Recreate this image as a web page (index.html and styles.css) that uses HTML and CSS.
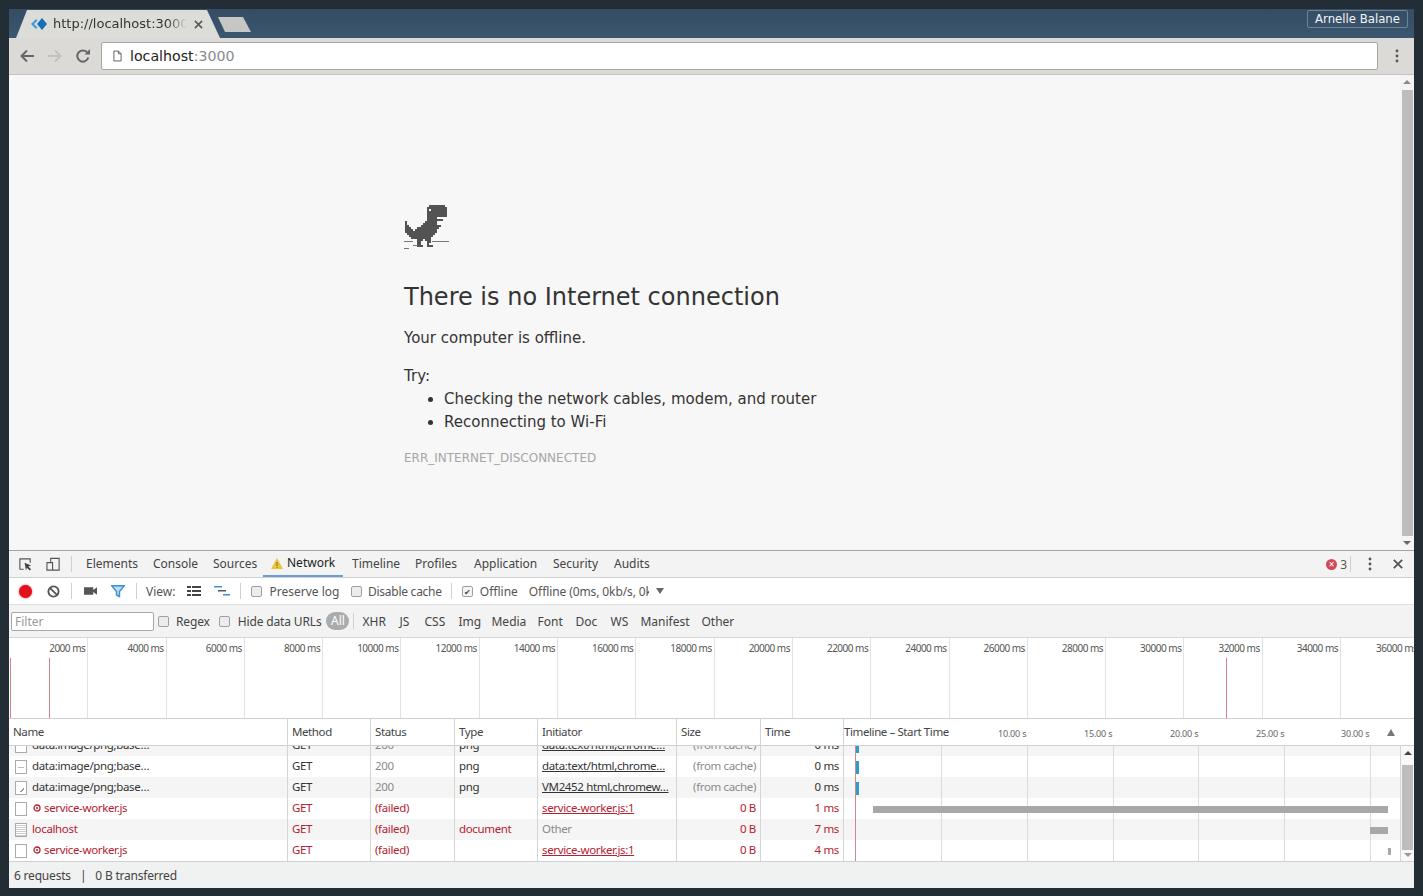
FILE: index.html
```html
<!DOCTYPE html>
<html lang="en">
<head>
<meta charset="utf-8">
<title>localhost:3000</title>
<link rel="stylesheet" href="styles.css">
</head>
<body>
<div class="window">
  <div class="tabstrip">
    <div class="tab">
      <svg class="favicon" viewBox="0 0 16 12"><path d="M5 1 0 6l5 5 1.500-1.500L3 6l3.500-3.500z" fill="#3f9bd8"/><path d="M11 0l-5 6 5 6 5-6z" fill="#1470b8"/></svg>
      <span class="tab-title">http://localhost:3000</span>
      <svg class="tab-close" viewBox="0 0 10 10"><path d="M1 1l8 8M9 1l-8 8" stroke="#5a5a5a" stroke-width="1.800"/></svg>
    </div>
    <div class="newtab"></div>
    <div class="profile">Arnelle Balane</div>
  </div>
  <div class="toolbar">
    <svg class="nav nav-first" viewBox="0 0 16 16"><path d="M15 8H3M8 2.500 2.500 8 8 13.500" fill="none" stroke="#666" stroke-width="2"/></svg>
    <svg class="nav" viewBox="0 0 16 16"><path d="M1 8h12M8 2.500 13.500 8 8 13.500" fill="none" stroke="#c0c0bc" stroke-width="2"/></svg>
    <svg class="nav" viewBox="0 0 16 16"><path d="M13.300 9.500A5.600 5.600 0 1 1 12 4.200" fill="none" stroke="#666" stroke-width="2"/><path d="M9.500 6.500H15V1z" fill="#666"/></svg>
    <div class="omnibox">
      <svg class="page-icon" viewBox="0 0 10 13"><path d="M1 1h5l3 3v8H1zM6 1v3h3" fill="none" stroke="#555" stroke-width="1"/></svg>
      <span class="host">localhost</span><span class="port">:3000</span>
    </div>
    <svg class="kebab" viewBox="0 0 4 14"><circle cx="2" cy="2" r="1.400"/><circle cx="2" cy="7" r="1.400"/><circle cx="2" cy="12" r="1.400"/></svg>
  </div>
  <div class="viewport">
    <main class="page">
      <svg class="dino" viewBox="0 0 22 22" shape-rendering="crispEdges"><path fill="#535353" d="M12 0h8v1h-8zM11 1h10v1H11zM11 2h1v1h-1zM13 2h8v1h-8zM11 3h10v3H11zM11 6h5v1h-5zM11 7h8v1h-8zM0 8h1v1H0zM10 8h6v1h-6zM0 9h1v1H0zM9 9h7v1H9zM0 10h2v1H0zM8 10h10v1H8zM0 11h3v1H0zM6 11h11v1H6zM0 12h4v1H0zM5 12h11v1H5zM0 13h16v1H0zM1 14h14v1H1zM2 15h12v1H2zM3 16h10v1H3zM6 17h3v1H6zM10 17h3v1h-3zM6 18h2v1H6zM11 18h2v1h-2zM6 19h2v1H6zM11 19h1v1h-1zM6 20h3v1H6zM11 20h3v1h-3z"/></svg>
      <div class="ground"><i class="g1"></i><i class="g2"></i><i class="g3"></i><i class="g4"></i></div>
      <h1>There is no Internet connection</h1>
      <p class="lead">Your computer is offline.</p>
      <p class="try">Try:</p>
      <ul>
        <li>Checking the network cables, modem, and router</li>
        <li>Reconnecting to Wi-Fi</li>
      </ul>
      <div class="errcode">ERR_INTERNET_DISCONNECTED</div>
    </main>
    <div class="pagebar">
      <span class="arrow-up"></span><span class="pagethumb"></span><span class="arrow-down"></span>
    </div>
  </div>
  <section class="devtools">
    <div class="dt-tabs">
      <svg class="dt-ico ico-first" viewBox="0 0 16 16"><path d="M6 13H2V2h11v4" fill="none" stroke="#555" stroke-width="1.200"/><path d="M7 6l7 3-3 1 3 3-1.500 1.500-3-3-1 3z" fill="#444"/></svg>
      <svg class="dt-ico ico-device" viewBox="0 0 16 16"><path d="M5 6V1.500h9V14H1V6h6v8" fill="none" stroke="#555" stroke-width="1.200"/></svg>
      <span class="sep sep-tabs"></span>
      <span class="dt-tab t-elements">Elements</span>
      <span class="dt-tab t-console">Console</span>
      <span class="dt-tab t-sources">Sources</span>
      <span class="dt-tab t-network"><svg class="warn" viewBox="0 0 12 11"><path d="M6 0l6 11H0z" fill="#e9c53a"/><path d="M5.500 4h1v4h-1zM5.500 9h1v1h-1z" fill="#8a6d10"/></svg>Network</span>
      <span class="dt-tab t-timeline">Timeline</span>
      <span class="dt-tab t-profiles">Profiles</span>
      <span class="dt-tab t-application">Application</span>
      <span class="dt-tab t-security">Security</span>
      <span class="dt-tab t-audits">Audits</span>
      <span class="errors"><span class="err-dot">×</span>3</span>
      <span class="sep"></span>
      <svg class="kebab kebab-dt" viewBox="0 0 4 14"><circle cx="2" cy="2" r="1.400"/><circle cx="2" cy="7" r="1.400"/><circle cx="2" cy="12" r="1.400"/></svg>
      <svg class="dt-close" viewBox="0 0 10 10"><path d="M.8.8l8.400 8.400M9.200.8.800 9.200" stroke="#555" stroke-width="1.800"/></svg>
    </div>
    <div class="net-toolbar">
      <span class="record"></span>
      <svg class="t-ico ic-clear" viewBox="0 0 14 14"><circle cx="7" cy="7" r="5.500" fill="none" stroke="#555" stroke-width="2"/><path d="M3 3l8 8" stroke="#555" stroke-width="2"/></svg>
      <span class="sep sep-a"></span>
      <svg class="t-ico ic-cam" viewBox="0 0 14 10"><path d="M0 1h10v8H0zM10 4l4-3v8l-4-3z" fill="#555"/></svg>
      <svg class="t-ico ic-filter" viewBox="0 0 14 13"><path d="M.7.700h12.600L8.500 6.500v5l-3-1.500V6.500z" fill="#bcdcf0" stroke="#3a8fd0" stroke-width="1.400"/></svg>
      <span class="sep sep-b"></span>
      <span class="lbl view-lbl">View:</span>
      <svg class="t-ico ic-list" viewBox="0 0 14 10"><path d="M0 0h4v2H0zM5 0h9v2H5zM0 4h4v2H0zM5 4h9v2H5zM0 8h4v2H0zM5 8h9v2H5z" fill="#444"/></svg>
      <svg class="t-ico ic-wfall" viewBox="0 0 16 10"><path d="M0 0h8v1.500H0z" fill="#3a8fd0"/><path d="M4 4h8v1.500H4z" fill="#555"/><path d="M9 8h7v1.500H9z" fill="#3a8fd0"/></svg>
      <span class="sep sep-c"></span>
      <span class="cb cb-preserve"></span><span class="lbl">Preserve log</span>
      <span class="cb cb-disable"></span><span class="lbl lbl-tight">Disable cache</span>
      <span class="sep sep-d"></span>
      <span class="cb cb-checked">✔</span><span class="lbl">Offline</span>
      <span class="lbl throttle">Offline (0ms, 0kb/s, 0kb/s)</span>
      <span class="select-arrow"></span>
    </div>
    <div class="net-filter">
      <span class="filter-input">Filter</span>
      <span class="cb cb-regex"></span><span class="lbl">Regex</span>
      <span class="cb cb-hide"></span><span class="lbl">Hide data URLs</span>
      <span class="pill">All</span>
      <span class="sep sep-f"></span>
      <span class="ft f-xhr">XHR</span>
      <span class="ft f-js">JS</span>
      <span class="ft f-css">CSS</span>
      <span class="ft f-img">Img</span>
      <span class="ft f-media">Media</span>
      <span class="ft f-font">Font</span>
      <span class="ft f-doc">Doc</span>
      <span class="ft f-ws">WS</span>
      <span class="ft f-man">Manifest</span>
      <span class="ft">Other</span>
    </div>
    <div class="overview">
      <span class="ov">2000 ms</span><span class="ov">4000 ms</span><span class="ov">6000 ms</span><span class="ov">8000 ms</span><span class="ov">10000 ms</span><span class="ov">12000 ms</span><span class="ov">14000 ms</span><span class="ov">16000 ms</span><span class="ov">18000 ms</span><span class="ov">20000 ms</span><span class="ov">22000 ms</span><span class="ov">24000 ms</span><span class="ov">26000 ms</span><span class="ov">28000 ms</span><span class="ov">30000 ms</span><span class="ov">32000 ms</span><span class="ov">34000 ms</span><span class="ov ov-last">36000 ms</span>
      <i class="ov-red r0"></i><i class="ov-red r1"></i><i class="ov-red r2"></i>
    </div>
    <div class="net-grid">
      <div class="ghead">
        <span class="gc">Name</span><span class="gc">Method</span><span class="gc">Status</span><span class="gc">Type</span><span class="gc">Initiator</span><span class="gc">Size</span><span class="gc">Time</span>
        <span class="gc gc-tl">Timeline – Start Time
          <span class="tk k1">10.00 s</span><span class="tk k2">15.00 s</span><span class="tk k3">20.00 s</span><span class="tk k4">25.00 s</span><span class="tk k5">30.00 s</span>
          <span class="sort"></span>
        </span>
      </div>
      <div class="gbody">
        <div class="rows">
          <div class="row alt"><span class="gc name"><i class="file"></i>data:image/png;base…</span><span class="gc">GET</span><span class="gc muted">200</span><span class="gc">png</span><span class="gc"><u>data:text/html,chrome…</u></span><span class="gc muted right">(from cache)</span><span class="gc right">0 ms</span><span class="gc"></span></div>
          <div class="row"><span class="gc name"><i class="file file-dash"></i>data:image/png;base…</span><span class="gc">GET</span><span class="gc muted">200</span><span class="gc">png</span><span class="gc"><u>data:text/html,chrome…</u></span><span class="gc muted right">(from cache)</span><span class="gc right">0 ms</span><span class="gc"></span></div>
          <div class="row alt"><span class="gc name"><i class="file file-img"></i>data:image/png;base…</span><span class="gc">GET</span><span class="gc muted">200</span><span class="gc">png</span><span class="gc"><u>VM2452 html,chromew…</u></span><span class="gc muted right">(from cache)</span><span class="gc right">0 ms</span><span class="gc"></span></div>
          <div class="row fail"><span class="gc name"><i class="file"></i><svg class="stop" viewBox="0 0 8 8"><circle cx="4" cy="4" r="3" fill="none" stroke="#b5212f" stroke-width="1.300"/><circle cx="4" cy="4" r="1" fill="#b5212f"/></svg>service-worker.js</span><span class="gc">GET</span><span class="gc">(failed)</span><span class="gc"></span><span class="gc"><u>service-worker.js:1</u></span><span class="gc right">0 B</span><span class="gc right">1 ms</span><span class="gc"></span></div>
          <div class="row alt fail"><span class="gc name"><i class="file file-doc"></i>localhost</span><span class="gc">GET</span><span class="gc">(failed)</span><span class="gc">document</span><span class="gc other">Other</span><span class="gc right">0 B</span><span class="gc right">7 ms</span><span class="gc"></span></div>
          <div class="row fail"><span class="gc name"><i class="file"></i><svg class="stop" viewBox="0 0 8 8"><circle cx="4" cy="4" r="3" fill="none" stroke="#b5212f" stroke-width="1.300"/><circle cx="4" cy="4" r="1" fill="#b5212f"/></svg>service-worker.js</span><span class="gc">GET</span><span class="gc">(failed)</span><span class="gc"></span><span class="gc"><u>service-worker.js:1</u></span><span class="gc right">0 B</span><span class="gc right">4 ms</span><span class="gc"></span></div>
        </div>
        <div class="tl-overlay">
          <i class="gl l1"></i><i class="gl l2"></i><i class="gl l3"></i><i class="gl l4"></i><i class="gl l5"></i><i class="gl l6"></i>
          <i class="redline"></i>
          <i class="bar blue b0"></i><i class="bar blue b1"></i><i class="bar blue b2"></i>
          <i class="bar gray b3"></i><i class="bar gray b4"></i><i class="bar gray b5"></i>
        </div>
        <div class="gridbar">
          <span class="arrow-up dark"></span><span class="gridthumb"></span><span class="arrow-down"></span>
        </div>
      </div>
    </div>
    <div class="summary"><span>6 requests</span><span class="pipe">|</span><span>0 B transferred</span></div>
  </section>
</div>
</body>
</html>
```
FILE: styles.css
```css
* { box-sizing: border-box; }
html, body { margin: 0; height: 100%; }
body { background: #232d35; padding: 9px 9px 8px; overflow: hidden; font-family: "DejaVu Sans", sans-serif; }
.window { width: 1405px; height: 879px; display: flex; flex-direction: column; background: #f7f7f7; }

/* tab strip */
.tabstrip { height: 29px; flex: none; display: flex; align-items: flex-end; background: linear-gradient(#354d64, #3b566f); position: relative; }
.tab { margin-left: 7px; width: 204px; height: 28px; flex: none; display: flex; align-items: center; padding-left: 15px; background: #dcdcd8;
  clip-path: polygon(0 100%, 11px 0, 191px 0, 204px 100%); }
.favicon { width: 16px; height: 12px; flex: none; }
.tab-title { width: 134px; margin: -2px 0 0 6px; font-size: 13px; color: #333; white-space: nowrap; overflow: hidden; flex: none;
  -webkit-mask-image: linear-gradient(90deg, #000 85%, transparent); mask-image: linear-gradient(90deg, #000 85%, transparent); }
.tab-close { width: 9px; height: 9px; margin-left: 7px; flex: none; }
.newtab { width: 33px; height: 15px; margin: 0 0 6px -2px; background: #c6c6c4; clip-path: polygon(0 0, 25px 0, 33px 100%, 7px 100%); flex: none; }
.profile { margin: 0 6px 10px auto; width: 101px; height: 18px; border: 1px solid #6e8499; border-radius: 2px; color: #f2f4f6; font-size: 11.700px; line-height: 16px; text-align: center; white-space: nowrap; }

/* toolbar */
.toolbar { height: 37px; flex: none; display: flex; align-items: center; background: #dbdad6; border-bottom: 1px solid #c4c4c0; }
.nav { width: 16px; height: 16px; margin-right: 12px; flex: none; }
.nav-first { margin-left: 10px; }
.omnibox { width: 1277px; height: 28px; margin-left: -2px; flex: none; display: flex; align-items: center; background: #fff; border: 1px solid #a5a5a2; border-radius: 2px; padding-left: 11px; font-size: 14.200px; }
.page-icon { width: 9px; height: 12px; margin-right: 8px; flex: none; }
.host { color: #222; }
.port { color: #8a8a8a; }
.kebab { width: 4px; height: 14px; fill: #555; flex: none; }
.toolbar .kebab { margin-left: 17px; }

/* page */
.viewport { height: 475px; flex: none; display: flex; background: #f7f7f7; }
.page { flex: 1; padding: 130px 0 0 395px; color: #333; position: relative; min-width: 0; }
.dino { display: block; width: 44px; height: 44px; margin-left: 1px; }
.ground { position: absolute; left: 395px; top: 0; }
.ground i { position: absolute; height: 1px; background: #777; }
.g1 { left: 0; top: 166px; width: 9px; }
.g2 { left: 28px; top: 166px; width: 17px; }
.g3 { left: 9px; top: 170px; width: 5px; }
.g4 { left: 0; top: 173px; width: 5px; }
h1 { margin: 28px 0 0; font-size: 24px; font-weight: 400; line-height: 40px; height: 41px; white-space: nowrap; }
.lead { margin: 10px 0 0; font-size: 15px; line-height: 20px; }
.try { margin: 18px 0 0; font-size: 15px; line-height: 20px; }
ul { margin: 2px 0 0; padding-left: 40px; font-size: 15px; }
li { line-height: 23px; }
.errcode { margin-top: 16px; font-size: 12px; line-height: 16px; color: #a6a6a6; }
.pagebar { width: 14px; flex: none; background: #f4f4f4; display: flex; flex-direction: column; align-items: center; position: relative; }
.arrow-up { width: 0; height: 0; border: 4px solid transparent; border-top: 0; border-bottom: 4px solid #8a8a8a; margin-top: 5px; flex: none; }
.arrow-down { width: 0; height: 0; border: 4px solid transparent; border-bottom: 0; border-top: 4px solid #666; margin-bottom: 5px; flex: none; }
.pagethumb { width: 11px; flex: 1; background: #bdbdbd; margin: 6px 0 5px; }

/* devtools */
.devtools { flex: 1; display: flex; flex-direction: column; font-family: "Noto Sans", sans-serif; font-size: 12px; color: #333; background: #fff; min-height: 0; }
.dt-tabs { height: 28px; flex: none; display: flex; align-items: center; background: #f3f3f3; border-top: 1px solid #a3a3a3; border-bottom: 1px solid #cfcfcf; position: relative; }
.dt-ico { width: 15px; height: 15px; flex: none; }
.ico-first { margin-left: 9px; }
.ico-device { margin-left: 13px; }
.sep { width: 1px; height: 16px; background: #d0d0d0; flex: none; }
.sep-tabs { margin-left: 10px; margin-right: 14px; }
.dt-tab { flex: none; height: 100%; line-height: 26px; color: #444; white-space: nowrap; display: flex; align-items: center; }
.t-elements { width: 67px; } .t-console { width: 60px; } .t-sources { width: 50px; }
.t-network { width: 80px; padding-left: 8px; color: #222; border-bottom: 2px solid #6d9bd8; }
.t-timeline { width: 72px; padding-left: 9px; } .t-profiles { width: 59px; } .t-application { width: 79px; } .t-security { width: 61px; }
.warn { width: 12px; height: 11px; margin-right: 4px; flex: none; }
.errors { margin-left: auto; display: flex; align-items: center; color: #555; margin-right: 3px; }
.err-dot { width: 11px; height: 11px; border-radius: 50%; background: #d0495a; color: #fff; font-size: 10px; line-height: 11px; text-align: center; margin-right: 3px; }
.kebab-dt { margin-left: 17px; }
.dt-close { width: 10px; height: 10px; margin: 0 11px 0 21px; flex: none; }

.net-toolbar { height: 27px; flex: none; display: flex; align-items: center; background: #fff; border-bottom: 1px solid #dedede; white-space: nowrap; }
.record { width: 13px; height: 13px; border-radius: 50%; background: #e0101c; box-shadow: 0 0 2px #e33; margin-left: 10px; flex: none; }
.t-ico { flex: none; }
.ic-clear { width: 13px; height: 13px; margin-left: 15px; }
.sep-a { margin-left: 11px; }
.ic-cam { width: 13px; height: 10px; margin-left: 12px; }
.ic-filter { width: 14px; height: 13px; margin-left: 14px; }
.sep-b { margin-left: 11px; }
.lbl { color: #555; flex: none; }
.lbl-tight { letter-spacing: -.25px; }
.view-lbl { margin-left: 9px; }
.ic-list { width: 14px; height: 10px; margin-left: 12px; }
.ic-wfall { width: 16px; height: 10px; margin-left: 13px; }
.sep-c { margin-left: 10px; }
.cb { width: 11px; height: 11px; flex: none; border: 1px solid #a0a0a0; border-radius: 2px; background: #ececec; margin-right: 7px; color: #444; font-size: 8px; line-height: 9px; text-align: center; overflow: hidden; }
.cb-preserve { margin-left: 10px; }
.cb-disable { margin-left: 11.500px; margin-right: 6px; }
.sep-d { margin-left: 9px; }
.cb-checked { margin-left: 10px; background: #f4f4f4; }
.throttle { width: 120px; margin-left: 11px; overflow: hidden; letter-spacing: -.1px; }
.select-arrow { width: 0; height: 0; border: 4.500px solid transparent; border-bottom: 0; border-top: 6px solid #666; margin-left: 7px; flex: none; }

.net-filter { height: 33px; flex: none; display: flex; align-items: center; background: #f3f3f3; border-bottom: 1px solid #d6d6d6; white-space: nowrap; color: #444; }
.filter-input { width: 143px; height: 19px; margin-left: 2px; border: 1px solid #a8a8a8; border-radius: 2px; background: #fff; color: #9a9a9a; line-height: 17px; padding-left: 3px; flex: none; }
.cb-regex { margin-left: 4px; margin-right: 7px; }
.cb-hide { margin-left: 9.500px; margin-right: 7.500px; }
.net-filter .lbl { color: #444; letter-spacing: -.15px; }
.pill { width: 23px; height: 18px; border-radius: 9px; background: #ababab; color: #fff; text-align: center; line-height: 18px; margin-left: 5px; flex: none; }
.sep-f { margin-left: 4px; margin-right: 8px; }
.ft { flex: none; }
.f-xhr { width: 37px; } .f-js { width: 25px; } .f-css { width: 34px; } .f-img { width: 33px; } .f-media { width: 46px; } .f-font { width: 38px; } .f-doc { width: 35px; } .f-ws { width: 30px; } .f-man { width: 61px; }

.overview { height: 81px; flex: none; display: flex; padding-left: 1px; background: #fff; border-bottom: 1px solid #cfcfcf; position: relative; overflow: hidden; }
.ov { width: 78.300px; flex: none; height: 100%; border-right: 1px solid #e2e2e2; text-align: right; padding: 2px 2px 0 0; font-size: 10px; letter-spacing: -.5px; color: #555; white-space: nowrap; overflow: hidden; line-height: 16px; }
.ov-last { text-align: left; padding-left: 35px; border: 0; }
.ov-red { position: absolute; top: 20px; bottom: 0; width: 1px; background: #d9808a; }
.r0 { left: 1px; } .r1 { left: 40px; } .r2 { left: 1217px; }

.net-grid { flex: none; display: flex; flex-direction: column; min-height: 0; }
.ghead, .row { display: grid; grid-template-columns: 279px 83px 84px 83px 139px 84px 83px 1fr; }
.ghead { height: 27px; flex: none; background: #fff; border-bottom: 1px solid #cfcfcf; }
.gc { display: block; padding: 0 4px; border-right: 1px solid #d5d5d5; white-space: nowrap; overflow: hidden; line-height: 26px; font-size: 11.500px; letter-spacing: -.35px; color: #444; }
.ghead > .gc { letter-spacing: -.4px; }
.gc:last-child { border-right: 0; }
.gc-tl { position: relative; padding: 0; overflow: visible; }
.ghead .tk { position: absolute; top: 2px; font-size: 9px; letter-spacing: -.2px; color: #666; line-height: 26px; }
.k1 { left: 154px; } .k2 { left: 240px; } .k3 { left: 326px; } .k4 { left: 412px; } .k5 { left: 497px; }
.sort { position: absolute; left: 543px; top: 10px; width: 0; height: 0; border: 4px solid transparent; border-top: 0; border-bottom: 7px solid #777; }
.gbody { height: 116px; flex: none; position: relative; overflow: hidden; border-bottom: 1px solid #cfcfcf; background: #fff; }
.rows { margin-top: -11px; }
.row { height: 21px; background: #fff; }
.row.alt { background: #f5f5f5; }
.row .gc { line-height: 20px; color: #333; }
.row .muted, .row .other { color: #8a8a8a; }
.row .right { text-align: right; }
.row .gc:nth-child(6) { color: #8a8a8a; }
.row.fail .gc { color: #b5212f; }
.row.fail .other { color: #8a8a8a; }
.row .name { display: flex; align-items: flex-start; padding-left: 6px; }
.file { width: 12px; height: 14px; flex: none; margin: 4px 5px 0 0; border: 1px solid #aaa; background: #fff; }
.file-dash { background: linear-gradient(#bbb, #bbb) center/6px 1px no-repeat #fff; }
.file-img { background: linear-gradient(135deg, transparent 60%, #999 60%, #999 75%, transparent 75%) 3px 4px/5px 6px no-repeat #fff; }
.file-doc { background: repeating-linear-gradient(#fff 0 1px, #ccc 1px 2px); }
.stop { width: 8px; height: 8px; margin: 6px 3px 0 1px; flex: none; }
.tl-overlay { position: absolute; left: 834px; top: 0; bottom: 0; width: 557px; pointer-events: none; }
.gl { position: absolute; top: 0; bottom: 0; width: 1px; background: #dcdcdc; }
.l1 { left: 98px; } .l2 { left: 184px; } .l3 { left: 270px; } .l4 { left: 355px; } .l5 { left: 441px; } .l6 { left: 527px; }
.redline { position: absolute; left: 12px; top: 0; bottom: 0; width: 1px; background: #c98a92; }
.bar { position: absolute; }
.blue { left: 13px; width: 3px; background: #2f9bcb; }
.b0 { top: 0; height: 7px; } .b1 { top: 15px; height: 13px; } .b2 { top: 36px; height: 13px; }
.gray { background: #a8a8a8; height: 7px; }
.b3 { left: 30px; width: 515px; top: 60px; }
.b4 { left: 527px; width: 18px; top: 81px; }
.b5 { left: 545px; width: 3px; top: 102px; }
.gridbar { position: absolute; right: 0; top: 0; bottom: 0; width: 14px; background: #f8f8f8; border-left: 1px solid #d5d5d5; display: flex; flex-direction: column; align-items: center; }
.arrow-up.dark { border-bottom-color: #444; }
.gridthumb { width: 11px; flex: 1; background: #bdbdbd; margin: 10px 0 3px; }
.gridbar .arrow-down { border-top-color: #999; margin-bottom: 4px; }
.summary { flex: 1; display: flex; align-items: center; gap: 9px; padding-left: 5px; background: #f0f1f1; color: #444; white-space: nowrap; letter-spacing: -.2px; }
```
